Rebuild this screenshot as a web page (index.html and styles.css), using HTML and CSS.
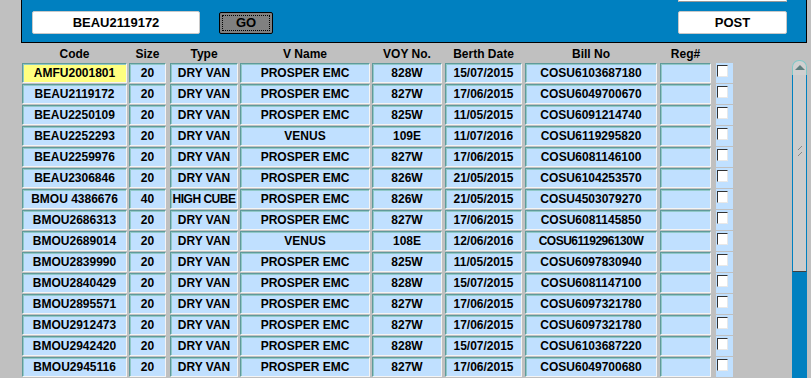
FILE: index.html
```html
<!DOCTYPE html>
<html>
<head>
<meta charset="utf-8">
<link rel="stylesheet" href="styles.css">
</head>
<body>
<div class="page">
  <div class="panel">
    <div class="search">BEAU2119172</div>
    <div class="go"><span class="go-inner">GO</span></div>
    <div class="right-group">
      <div class="top-box"></div>
      <div class="post">POST</div>
    </div>
  </div>
  <div class="main">
    <div class="grid">
      <div class="row head">
        <div class="c code">Code</div><div class="c size">Size</div><div class="c type">Type</div><div class="c vname">V Name</div><div class="c voy">VOY No.</div><div class="c berth">Berth Date</div><div class="c bill">Bill No</div><div class="c reg">Reg#</div><div class="c chk"></div>
      </div>
      <div class="row"><div class="c cell code hl">AMFU2001801</div><div class="c cell size">20</div><div class="c cell type">DRY VAN</div><div class="c cell vname">PROSPER EMC</div><div class="c cell voy">828W</div><div class="c cell berth">15/07/2015</div><div class="c cell bill">COSU6103687180</div><div class="c cell reg"></div><div class="c chk"><span class="box"></span></div></div>
      <div class="row"><div class="c cell code">BEAU2119172</div><div class="c cell size">20</div><div class="c cell type">DRY VAN</div><div class="c cell vname">PROSPER EMC</div><div class="c cell voy">827W</div><div class="c cell berth">17/06/2015</div><div class="c cell bill">COSU6049700670</div><div class="c cell reg"></div><div class="c chk"><span class="box"></span></div></div>
      <div class="row"><div class="c cell code">BEAU2250109</div><div class="c cell size">20</div><div class="c cell type">DRY VAN</div><div class="c cell vname">PROSPER EMC</div><div class="c cell voy">825W</div><div class="c cell berth">11/05/2015</div><div class="c cell bill">COSU6091214740</div><div class="c cell reg"></div><div class="c chk"><span class="box"></span></div></div>
      <div class="row"><div class="c cell code">BEAU2252293</div><div class="c cell size">20</div><div class="c cell type">DRY VAN</div><div class="c cell vname">VENUS</div><div class="c cell voy">109E</div><div class="c cell berth">11/07/2016</div><div class="c cell bill">COSU6119295820</div><div class="c cell reg"></div><div class="c chk"><span class="box"></span></div></div>
      <div class="row"><div class="c cell code">BEAU2259976</div><div class="c cell size">20</div><div class="c cell type">DRY VAN</div><div class="c cell vname">PROSPER EMC</div><div class="c cell voy">827W</div><div class="c cell berth">17/06/2015</div><div class="c cell bill">COSU6081146100</div><div class="c cell reg"></div><div class="c chk"><span class="box"></span></div></div>
      <div class="row"><div class="c cell code">BEAU2306846</div><div class="c cell size">20</div><div class="c cell type">DRY VAN</div><div class="c cell vname">PROSPER EMC</div><div class="c cell voy">826W</div><div class="c cell berth">21/05/2015</div><div class="c cell bill">COSU6104253570</div><div class="c cell reg"></div><div class="c chk"><span class="box"></span></div></div>
      <div class="row"><div class="c cell code">BMOU 4386676</div><div class="c cell size">40</div><div class="c cell type tight">HIGH CUBE</div><div class="c cell vname">PROSPER EMC</div><div class="c cell voy">826W</div><div class="c cell berth">21/05/2015</div><div class="c cell bill">COSU4503079270</div><div class="c cell reg"></div><div class="c chk"><span class="box"></span></div></div>
      <div class="row"><div class="c cell code">BMOU2686313</div><div class="c cell size">20</div><div class="c cell type">DRY VAN</div><div class="c cell vname">PROSPER EMC</div><div class="c cell voy">827W</div><div class="c cell berth">17/06/2015</div><div class="c cell bill">COSU6081145850</div><div class="c cell reg"></div><div class="c chk"><span class="box"></span></div></div>
      <div class="row"><div class="c cell code">BMOU2689014</div><div class="c cell size">20</div><div class="c cell type">DRY VAN</div><div class="c cell vname">VENUS</div><div class="c cell voy">108E</div><div class="c cell berth">12/06/2016</div><div class="c cell bill tight">COSU6119296130W</div><div class="c cell reg"></div><div class="c chk"><span class="box"></span></div></div>
      <div class="row"><div class="c cell code">BMOU2839990</div><div class="c cell size">20</div><div class="c cell type">DRY VAN</div><div class="c cell vname">PROSPER EMC</div><div class="c cell voy">825W</div><div class="c cell berth">11/05/2015</div><div class="c cell bill">COSU6097830940</div><div class="c cell reg"></div><div class="c chk"><span class="box"></span></div></div>
      <div class="row"><div class="c cell code">BMOU2840429</div><div class="c cell size">20</div><div class="c cell type">DRY VAN</div><div class="c cell vname">PROSPER EMC</div><div class="c cell voy">828W</div><div class="c cell berth">15/07/2015</div><div class="c cell bill">COSU6081147100</div><div class="c cell reg"></div><div class="c chk"><span class="box"></span></div></div>
      <div class="row"><div class="c cell code">BMOU2895571</div><div class="c cell size">20</div><div class="c cell type">DRY VAN</div><div class="c cell vname">PROSPER EMC</div><div class="c cell voy">827W</div><div class="c cell berth">17/06/2015</div><div class="c cell bill">COSU6097321780</div><div class="c cell reg"></div><div class="c chk"><span class="box"></span></div></div>
      <div class="row"><div class="c cell code">BMOU2912473</div><div class="c cell size">20</div><div class="c cell type">DRY VAN</div><div class="c cell vname">PROSPER EMC</div><div class="c cell voy">827W</div><div class="c cell berth">17/06/2015</div><div class="c cell bill">COSU6097321780</div><div class="c cell reg"></div><div class="c chk"><span class="box"></span></div></div>
      <div class="row"><div class="c cell code">BMOU2942420</div><div class="c cell size">20</div><div class="c cell type">DRY VAN</div><div class="c cell vname">PROSPER EMC</div><div class="c cell voy">828W</div><div class="c cell berth">15/07/2015</div><div class="c cell bill">COSU6103687220</div><div class="c cell reg"></div><div class="c chk"><span class="box"></span></div></div>
      <div class="row"><div class="c cell code">BMOU2945116</div><div class="c cell size">20</div><div class="c cell type">DRY VAN</div><div class="c cell vname">PROSPER EMC</div><div class="c cell voy">827W</div><div class="c cell berth">17/06/2015</div><div class="c cell bill">COSU6049700680</div><div class="c cell reg"></div><div class="c chk"><span class="box"></span></div></div>
    </div>
    <div class="scrollbar">
      <div class="sb-cap"><svg width="10" height="6" viewBox="0 0 10 6"><polygon points="5,0 10,5 0,5" fill="#5f7f7f"/></svg></div>
      <div class="sb-track">
        <svg class="grip" width="10" height="12" viewBox="0 0 10 12"><g fill="#888"><rect x="7" y="0" width="1" height="1"/><rect x="6" y="1" width="1" height="1"/><rect x="5" y="2" width="1" height="1"/><rect x="4" y="3" width="1" height="1"/><rect x="7" y="6" width="1" height="1"/><rect x="6" y="7" width="1" height="1"/><rect x="5" y="8" width="1" height="1"/><rect x="4" y="9" width="1" height="1"/></g></svg>
      </div>
      <div class="sb-fill"></div>
    </div>
  </div>
</div>
</body>
</html>
```
FILE: styles.css
```css
html, body {
  margin: 0;
  padding: 0;
  background: #ffffff;
}
body {
  font-family: "Liberation Sans", Arial, sans-serif;
  font-size: 12px;
  font-weight: bold;
  color: #000;
}
.page {
  height: 378px;
  overflow: hidden;
  background: #c0c0c0;
  padding-left: 21px;
  display: flex;
  flex-direction: column;
}
.panel {
  height: 42px;
  flex: none;
  background: #0080c0;
  border-left: 1px solid #000;
  border-right: 1px solid #000;
  border-bottom: 1px solid #000;
  margin-right: 4px;
  display: flex;
  align-items: flex-start;
  padding-left: 10px;
  padding-right: 19px;
}
.search {
  margin-top: 11px;
  width: 168px;
  height: 23px;
  box-sizing: border-box;
  background: #fff;
  border: 1px solid #c8c8c8;
  border-radius: 2px;
  text-align: center;
  line-height: 21px;
  font-size: 13px;
}
.go {
  margin-top: 12px;
  margin-left: 19px;
  width: 54px;
  height: 22px;
  box-sizing: border-box;
  background: #808080;
  border: 1px solid #000;
  border-radius: 2px;
  padding: 2px;
  display: flex;
}
.go-inner {
  flex: 1;
  border: 1px dotted #000;
  text-align: center;
  line-height: 14px;
  font-size: 13px;
}
.right-group {
  margin-left: auto;
  display: flex;
  flex-direction: column;
  width: 109px;
}
.top-box {
  height: 1px;
  background: #fff;
  border-bottom: 1px solid #999;
  border-left: 1px solid #ccc;
  border-right: 1px solid #ccc;
}
.post {
  margin-top: 9px;
  height: 23px;
  box-sizing: border-box;
  background: #fff;
  border: 1px solid #c8c8c8;
  border-radius: 2px;
  text-align: center;
  line-height: 21px;
  font-size: 13px;
}
.main {
  flex: 1;
  display: flex;
  align-items: flex-start;
  min-height: 0;
}
.grid {
  margin-left: 1px;
  display: flex;
  flex-direction: column;
  gap: 1px;
}
.row {
  display: flex;
  height: 20px;
}
.row.head {
  height: 19px;
}
.c {
  box-sizing: border-box;
  height: 20px;
  text-align: center;
  line-height: 18px;
  white-space: nowrap;
  overflow: hidden;
}
.head .c {
  height: 19px;
  line-height: 19px;
  padding-top: 2px;
}
.cell {
  background: #c0e0ff;
  border-style: solid;
  border-width: 1px;
  border-color: #5f9a9a #f4f4f4 #f4f4f4 #5f9a9a;
  box-shadow: inset 1px 1px 0 #90c8c8;
}
.cell.hl {
  background: #ffff80;
}
.cell.tight {
  letter-spacing: -0.5px;
}
.code { width: 105px; margin-right: 2px; }
.size { width: 37px; margin-right: 4px; }
.type { width: 68px; margin-right: 2px; }
.vname { width: 130px; margin-right: 2px; }
.voy { width: 70px; margin-right: 3px; }
.berth { width: 77px; margin-right: 3px; }
.bill { width: 132px; margin-right: 3px; }
.reg { width: 51px; margin-right: 5px; }
.chk { width: 17px; }
.row .chk {
  background: #c0e0ff;
}
.row.head .chk {
  background: transparent;
}
.box {
  display: block;
  margin: 2px 0 0 1px;
  width: 11px;
  height: 12px;
  box-sizing: border-box;
  background: #fff;
  border-style: solid;
  border-width: 1px;
  border-color: #333 #e8e8e8 #e8e8e8 #333;
}
.scrollbar {
  margin-left: auto;
  margin-right: 4px;
  margin-top: 17px;
  width: 15px;
  display: flex;
  flex-direction: column;
  height: 330px;
}
.sb-cap {
  height: 15px;
  box-sizing: border-box;
  border: 1px solid #80c8c8;
  border-bottom: none;
  border-radius: 7px 7px 0 0;
  background: #d0d0d0;
  display: flex;
  justify-content: center;
  padding-top: 4px;
}
.sb-track {
  height: 197px;
  box-sizing: border-box;
  background: #cccccc;
  border-left: 1px solid #0080c0;
  border-right: 1px solid #0080c0;
  border-bottom: 1px solid #404040;
  position: relative;
}
.grip {
  position: absolute;
  left: 1px;
  top: 71px;
}
.sb-fill {
  flex: 1;
  background: #0080c0;
}
```
